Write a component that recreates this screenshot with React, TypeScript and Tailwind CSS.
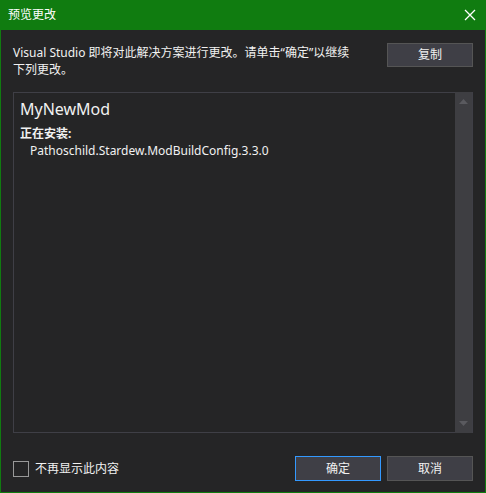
import React from "react";

const font = { fontFamily: '"Segoe UI", "Noto Sans", "Noto Sans CJK SC", sans-serif' };

export default function App() {
  return (
    <div
      className="w-[486px] h-[493px] flex flex-col bg-[#252526] border-x border-b border-[#107c10] text-[#f1f1f1] text-[12px]"
      style={font}
    >
      <div className="h-[30px] shrink-0 bg-[#107c10] flex items-center justify-between pl-[8px] pr-[9px] -mx-px">
        <span className="text-[12px] text-white leading-none">预览更改</span>
        <svg width="12" height="12" viewBox="0 0 12 12" className="mr-[1px]">
          <path d="M1 1 L11 11 M11 1 L1 11" stroke="#ffffff" strokeWidth="1.3" />
        </svg>
      </div>
      <div className="flex-1 flex flex-col px-[12px] pt-[13px] pb-[11px]">
        <div className="flex justify-between items-start">
          <p className="w-[342px] leading-[17px] pt-[1px]">
            Visual Studio 即将对此解决方案进行更改。请单击“确定”以继续下列更改。
          </p>
          <button className="w-[86px] h-[24px] bg-[#3f3f46] border border-[#555555] text-[12px] text-[#f1f1f1] leading-none">
            复制
          </button>
        </div>
        <div className="mt-[14px] h-[341px] border border-[#3f3f46] flex">
          <div className="flex-1 px-[6px] pt-[6px]">
            <div className="text-[16px] leading-[20px]">MyNewMod</div>
            <div className="mt-[7px] font-bold leading-[16px]">正在安装:</div>
            <div className="pl-[10px] leading-[17px]">Pathoschild.Stardew.ModBuildConfig.3.3.0</div>
          </div>
          <div className="w-[17px] -my-px bg-[#3e3e42] flex flex-col items-center justify-between py-[7px]">
            <svg width="9" height="5" viewBox="0 0 9 5">
              <path d="M0 5 L4.5 0 L9 5 Z" fill="#5a5a5f" />
            </svg>
            <svg width="9" height="5" viewBox="0 0 9 5">
              <path d="M0 0 L4.5 5 L9 0 Z" fill="#5a5a5f" />
            </svg>
          </div>
        </div>
        <div className="mt-auto flex items-center justify-between">
          <label className="flex items-center gap-[6px]">
            <span className="w-[16px] h-[16px] border border-[#999999] bg-[#252526]" />
            <span className="leading-none">不再显示此内容</span>
          </label>
          <div className="flex gap-[6px]">
            <button className="w-[86px] h-[25px] bg-[#3f3f46] border border-[#3399ff] text-[12px] text-[#f1f1f1] leading-none">
              确定
            </button>
            <button className="w-[86px] h-[25px] bg-[#3f3f46] border border-[#555555] text-[12px] text-[#f1f1f1] leading-none">
              取消
            </button>
          </div>
        </div>
      </div>
    </div>
  );
}
